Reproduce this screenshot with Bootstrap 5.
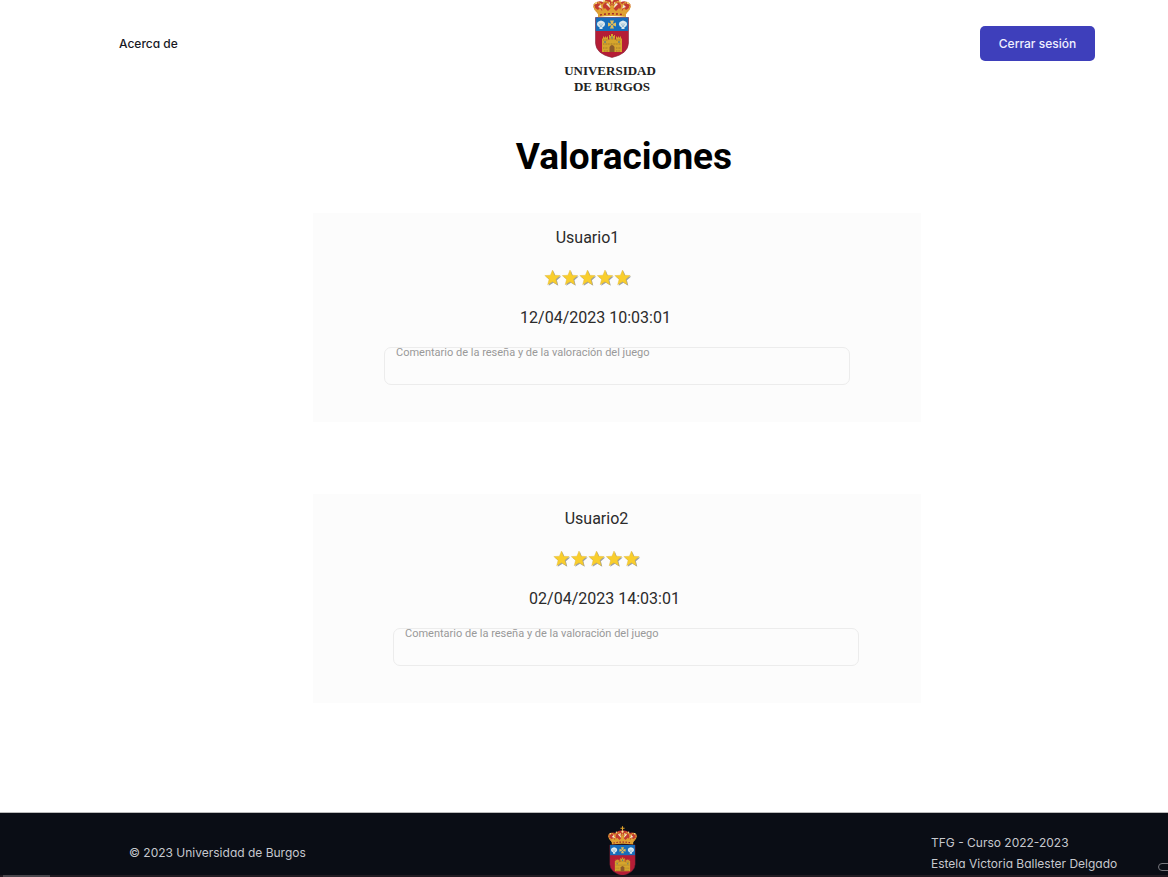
<!DOCTYPE html>
<html lang="es">
<head>
<meta charset="utf-8">
<meta name="viewport" content="width=device-width, initial-scale=1">
<title>Valoraciones</title>
<link href="https://cdn.jsdelivr.net/npm/bootstrap@5.3.0/dist/css/bootstrap.min.css" rel="stylesheet">
<style>
body{font-family:Roboto,"Liberation Sans",sans-serif;color:#2b2b2b;background:#fff}
.site-header,.site-footer{font-family:Inter,"Liberation Sans",sans-serif;font-feature-settings:"cv11"}
.site-header{padding:0 73px 0 119px}
.header-grid{display:grid;grid-template-columns:445fr 92fr 439fr}
.nav-item-link{color:#17181f;font-size:12px;font-weight:500;line-height:18px;margin-top:35px}
.brand-block{font:bold 13px/16px "Liberation Serif",serif;color:#222;text-decoration:none;white-space:nowrap}
.brand-block svg{width:42px;height:58px;padding-left:4px;margin-bottom:5px}
.brand-title{padding-left:4px}
.btn-logout{--bs-btn-bg:#3e3fbb;--bs-btn-color:#f0f0ff;--bs-btn-hover-bg:#3233a2;--bs-btn-hover-color:#fff;font-size:12px;font-weight:500;line-height:18px;width:115px;height:35px;padding:0;border:0;border-radius:5px;margin-top:26px}
.page-title{font-size:37px;font-weight:700;line-height:48px;color:#000;margin:38px 0 32px;padding-left:80px}
.reviews{padding-left:66px;gap:72px}
.review{width:608px;max-width:100%;height:209px;background:#fcfcfc;padding-top:13px;font-size:16px;line-height:24px}
.review:nth-child(even){padding-left:18px}
.review-line{padding-right:59px}
.review-date{padding-right:43px}
.stars{width:88px;height:18px;margin:19px 0}
.comment{width:466px;max-width:100%;height:38px;margin-top:17px;padding:0 11px;border:1px solid #ececec;border-radius:7px;background:transparent;color:#999;font-size:11px;line-height:9px;resize:none;overflow:hidden}
.site-footer{background:#0a0d15;color:#c6c8ce;font-size:12px;line-height:21px;height:65px;border-top:1px solid #bbb;padding:0 44px 0 129px}
.footer-grid{display:grid;grid-template-columns:479fr 29fr 294fr 193fr}
.footer-grid svg{width:29px;height:50px;margin-top:13px}
.footer-owner{padding-top:29px}
.footer-credits{padding-top:19px;white-space:nowrap}
.window-edge{height:2px;background:#221b22}
.edge-thumb{width:47px;height:2px;background:#4a464c;margin-left:3px}
.edge-handle{width:20px;height:8px;border:1px solid #77777d;border-radius:4px;right:-10px;bottom:6px}
</style>
</head>
<body>
<svg class="d-none" aria-hidden="true">
  <defs>
    <path id="star" d="M8.5 1l2.1 5.2 5.6.4-4.3 3.6 1.4 5.5-4.8-3-4.8 3 1.4-5.5L.8 6.600l5.600-.4z"/>
    <g id="rating">
      <g fill="#9ba0a8"><use href="#star" x="1" y="1"/><use href="#star" x="18.500" y="1"/><use href="#star" x="36" y="1"/><use href="#star" x="53.500" y="1"/><use href="#star" x="71" y="1"/></g>
      <g fill="#f9ce2c" stroke="#dfb73d" stroke-width=".4"><use href="#star"/><use href="#star" x="17.500"/><use href="#star" x="35"/><use href="#star" x="52.500"/><use href="#star" x="70"/></g>
    </g>
    <g id="crest">
      <path d="M18.300 0h1.400v2h2v1.400h-2V6h-1.400V3.400h-2V2h2z" fill="#e4a52b"/>
      <path d="M6 21Q-1 15 1 11Q5 7 10 9Q14 5 19 6Q24 5 28 9Q33 7 37 11Q39 15 32 21z" fill="#c23a31"/>
      <path d="M5 14l3-3 2 5zM13 11l4-2v6zM25 11l-4-2v6zM33 14l-3-3-2 5z" fill="#f5ead2"/>
      <g fill="none" stroke="#dda033" stroke-width="1.600" stroke-dasharray="2 .5"><path d="M6 21Q-2 13 3 10T11 20M11 20Q7 11 12 9T19 20M32 21Q40 13 35 10T27 20M27 20Q31 11 26 9T19 20M19 7V20"/></g>
      <g fill="#f6df91"><circle cx="3" cy="10" r="1"/><circle cx="11" cy="8" r="1"/><circle cx="19" cy="7" r="1.500"/><circle cx="27" cy="8" r="1"/><circle cx="35" cy="10" r="1"/></g>
      <path d="M2 15l3 2 2-2 2 3 3-3 3 3 4-4 4 4 3-3 3 3 2-3 2 2 3-2-4 7H6z" fill="#dfa333"/>
      <path d="M5 20q14-3 28 0v4q-14-2-28 0z" fill="#dfa333"/>
      <path d="M7 22q12-2.500 24 0" fill="none" stroke="#a32728" stroke-width="1.500" stroke-dasharray="2 2"/>
      <path d="M2.500 24.500H35.500V50Q35 61 19 64.500Q3 61 2.500 50z" fill="#b51d36" stroke="#84283a" stroke-width=".6"/>
      <path d="M2.700 24.600H35.300V38H2.700z" fill="#166dbb"/>
      <g fill="#dce9ef"><path id="shell" d="M8 27.500l2 .8 1.500 1 .6 2-.8 2-1.800 1V36h-3v-1.700l-1.800-1-.8-2 .6-2 1.500-1z"/><use href="#shell" x="22"/></g>
      <path d="M8 34V30M8 34L6 30.500M8 34l2-3.500M30 34v-4M30 34l-2-3.500M30 34l2-3.500" stroke="#6e9fbd" stroke-width=".5"/>
      <path d="M17 27.500h4l-1.200 3.200 3.200-1.200v4l-3.200-1.200L21 35.500h-4l1.200-3.200-3.200 1.200v-4l3.200 1.200z" fill="#dfbd5c"/>
      <circle cx="19" cy="31.500" r=".8" fill="#3c699b"/>
      <path d="M9 59V45.500h1v-2h1v1h1v-1h1v1h1v-1h1v3h1v-4.500h1v1h1v-2h2v2h1v-1h1v4.500h1v-3h1v1h1v-1h1v1h1v-1h1v2h1V59z" fill="#d6a52c"/>
      <path d="M16.500 59v-5q2.500-4 5 0v5z" fill="#8d5b2b"/>
      <path d="M10 47h5M23 47h5M16 46h6M10 51h18M10 55h5M23 55h5M11 58h4M23 58h4" stroke="#8b672a" stroke-width=".7" stroke-dasharray="1 .6"/>
      <path d="M12 48v2M26 48v2M19 43.500v2" stroke="#326e9d"/>
    </g>
  </defs>
</svg>
<div class="d-flex flex-column min-vh-100">
  <header class="site-header">
    <nav class="header-grid align-items-start">
      <a href="#" class="nav-item-link text-decoration-none">Acerca de</a>
      <a href="#" class="brand-block d-flex flex-column align-items-center">
        <svg viewBox="0 7 38 58" aria-hidden="true"><use href="#crest"/></svg>
        <span>UNIVERSIDAD</span>
        <span class="brand-title">DE BURGOS</span>
      </a>
      <div class="d-flex justify-content-end"><button type="button" class="btn btn-logout">Cerrar sesión</button></div>
    </nav>
  </header>
  <main>
    <h1 class="page-title text-center">Valoraciones</h1>
    <div class="reviews d-flex flex-column align-items-center">
      <article class="review d-flex flex-column align-items-center">
        <div class="review-line">Usuario1</div>
        <div class="review-line"><svg class="stars d-block" viewBox="0 0 88 18" role="img" aria-label="5 de 5 estrellas"><use href="#rating"/></svg></div>
        <div class="review-date">12/04/2023 10:03:01</div>
        <textarea class="comment" aria-label="Comentario de Usuario1" readonly>Comentario de la reseña y de la valoración del juego</textarea>
      </article>
      <article class="review d-flex flex-column align-items-center">
        <div class="review-line">Usuario2</div>
        <div class="review-line"><svg class="stars d-block" viewBox="0 0 88 18" role="img" aria-label="5 de 5 estrellas"><use href="#rating"/></svg></div>
        <div class="review-date">02/04/2023 14:03:01</div>
        <textarea class="comment" aria-label="Comentario de Usuario2" readonly>Comentario de la reseña y de la valoración del juego</textarea>
      </article>
    </div>
  </main>
  <footer class="site-footer mt-auto position-relative overflow-hidden">
    <div class="footer-grid">
      <div class="footer-owner">© 2023 Universidad de Burgos</div>
      <svg viewBox="0 0 38 65" aria-hidden="true"><use href="#crest"/></svg>
      <div></div>
      <div class="footer-credits">TFG - Curso 2022-2023<br>Estela Victoria Ballester Delgado</div>
    </div>
    <div class="window-edge position-absolute bottom-0 start-0 w-100"><div class="edge-thumb"></div></div>
    <div class="edge-handle position-absolute"></div>
  </footer>
</div>
<script src="https://cdn.jsdelivr.net/npm/bootstrap@5.3.0/dist/js/bootstrap.bundle.min.js"></script>
</body>
</html>
